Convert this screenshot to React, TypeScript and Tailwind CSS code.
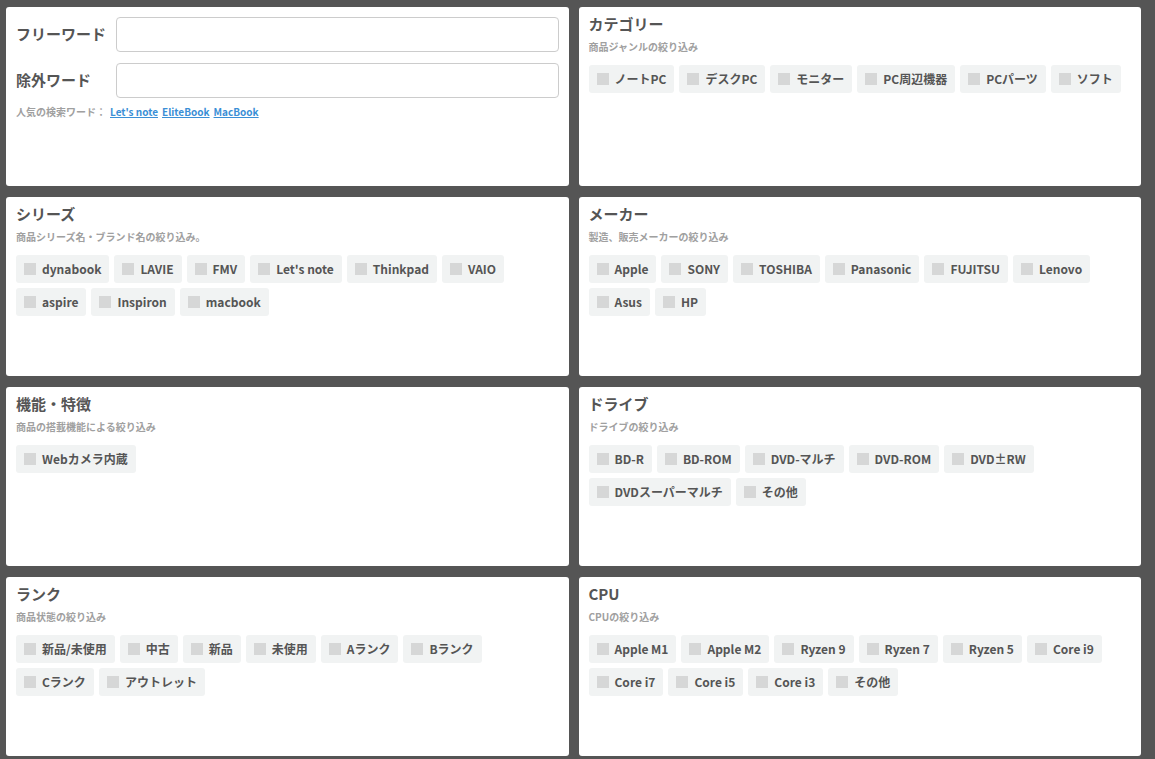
const font = { fontFamily: '"Noto Sans CJK JP", "Noto Sans", sans-serif' };

type Group = {
    title: string;
    note: string;
    items: string[];
};

const groups: Group[] = [
    {
        title: "カテゴリー",
        note: "商品ジャンルの絞り込み",
        items: ["ノートPC", "デスクPC", "モニター", "PC周辺機器", "PCパーツ", "ソフト"],
    },
    {
        title: "シリーズ",
        note: "商品シリーズ名・ブランド名の絞り込み。",
        items: ["dynabook", "LAVIE", "FMV", "Let's note", "Thinkpad", "VAIO", "aspire", "Inspiron", "macbook"],
    },
    {
        title: "メーカー",
        note: "製造、販売メーカーの絞り込み",
        items: ["Apple", "SONY", "TOSHIBA", "Panasonic", "FUJITSU", "Lenovo", "Asus", "HP"],
    },
    {
        title: "機能・特徴",
        note: "商品の搭載機能による絞り込み",
        items: ["Webカメラ内蔵"],
    },
    {
        title: "ドライブ",
        note: "ドライブの絞り込み",
        items: ["BD-R", "BD-ROM", "DVD-マルチ", "DVD-ROM", "DVD±RW", "DVDスーパーマルチ", "その他"],
    },
    {
        title: "ランク",
        note: "商品状態の絞り込み",
        items: ["新品/未使用", "中古", "新品", "未使用", "Aランク", "Bランク", "Cランク", "アウトレット"],
    },
    {
        title: "CPU",
        note: "CPUの絞り込み",
        items: ["Apple M1", "Apple M2", "Ryzen 9", "Ryzen 7", "Ryzen 5", "Core i9", "Core i7", "Core i5", "Core i3", "その他"],
    },
];

function Chip({ label }: { label: string }) {
    return (
        <label className="flex h-[28px] cursor-pointer items-center gap-[6px] rounded-[3px] bg-[#f1f3f3] pl-[8px] pr-[8px] text-[12px] font-bold text-[#555]">
            <span className="h-[12px] w-[12px] bg-[#d6d7d7]" />
            <span>{label}</span>
        </label>
    );
}

function Panel({ group }: { group: Group }) {
    return (
        <section className="rounded-[3px] bg-white pl-[10px] pr-[20px] pt-[6px]">
            <h2 className="text-[15px] leading-[22px] font-bold text-[#555]">{group.title}</h2>
            <p className="mt-[5px] text-[10px] leading-[14px] font-bold text-[#a0a0a0]">{group.note}</p>
            <div className="mt-[11px] flex flex-wrap gap-x-[5px] gap-y-[5px]">
                {group.items.map((item) => (
                    <Chip key={item} label={item} />
                ))}
            </div>
        </section>
    );
}

function KeywordPanel() {
    return (
        <section className="rounded-[3px] bg-white pl-[10px] pr-[10px] pt-[10px]">
            <div className="flex items-center">
                <span className="w-[100px] text-[15px] font-bold text-[#555]">フリーワード</span>
                <input className="h-[35px] flex-1 rounded-[4px] border border-[#ccc] px-2 outline-none" />
            </div>
            <div className="mt-[11px] flex items-center">
                <span className="w-[100px] text-[15px] font-bold text-[#555]">除外ワード</span>
                <input className="h-[35px] flex-1 rounded-[4px] border border-[#ccc] px-2 outline-none" />
            </div>
            <p className="mt-[7px] text-[10px] leading-[14px] font-bold text-[#a0a0a0]">
                人気の検索ワード：
                <a href="#" className="ml-[4px] text-[#3a8fd6] underline">Let's note</a>
                <a href="#" className="ml-[4px] text-[#3a8fd6] underline">EliteBook</a>
                <a href="#" className="ml-[4px] text-[#3a8fd6] underline">MacBook</a>
            </p>
        </section>
    );
}

export default function App() {
    return (
        <main style={font} className="min-h-screen bg-[#555555] pl-[6px] pr-[14px] pt-[7px] pb-[3px]">
            <div className="grid grid-cols-2 grid-rows-[179px_179px_179px_179px] gap-x-[10px] gap-y-[11px]">
                <KeywordPanel />
                {groups.map((g) => (
                    <Panel key={g.title} group={g} />
                ))}
            </div>
        </main>
    );
}
